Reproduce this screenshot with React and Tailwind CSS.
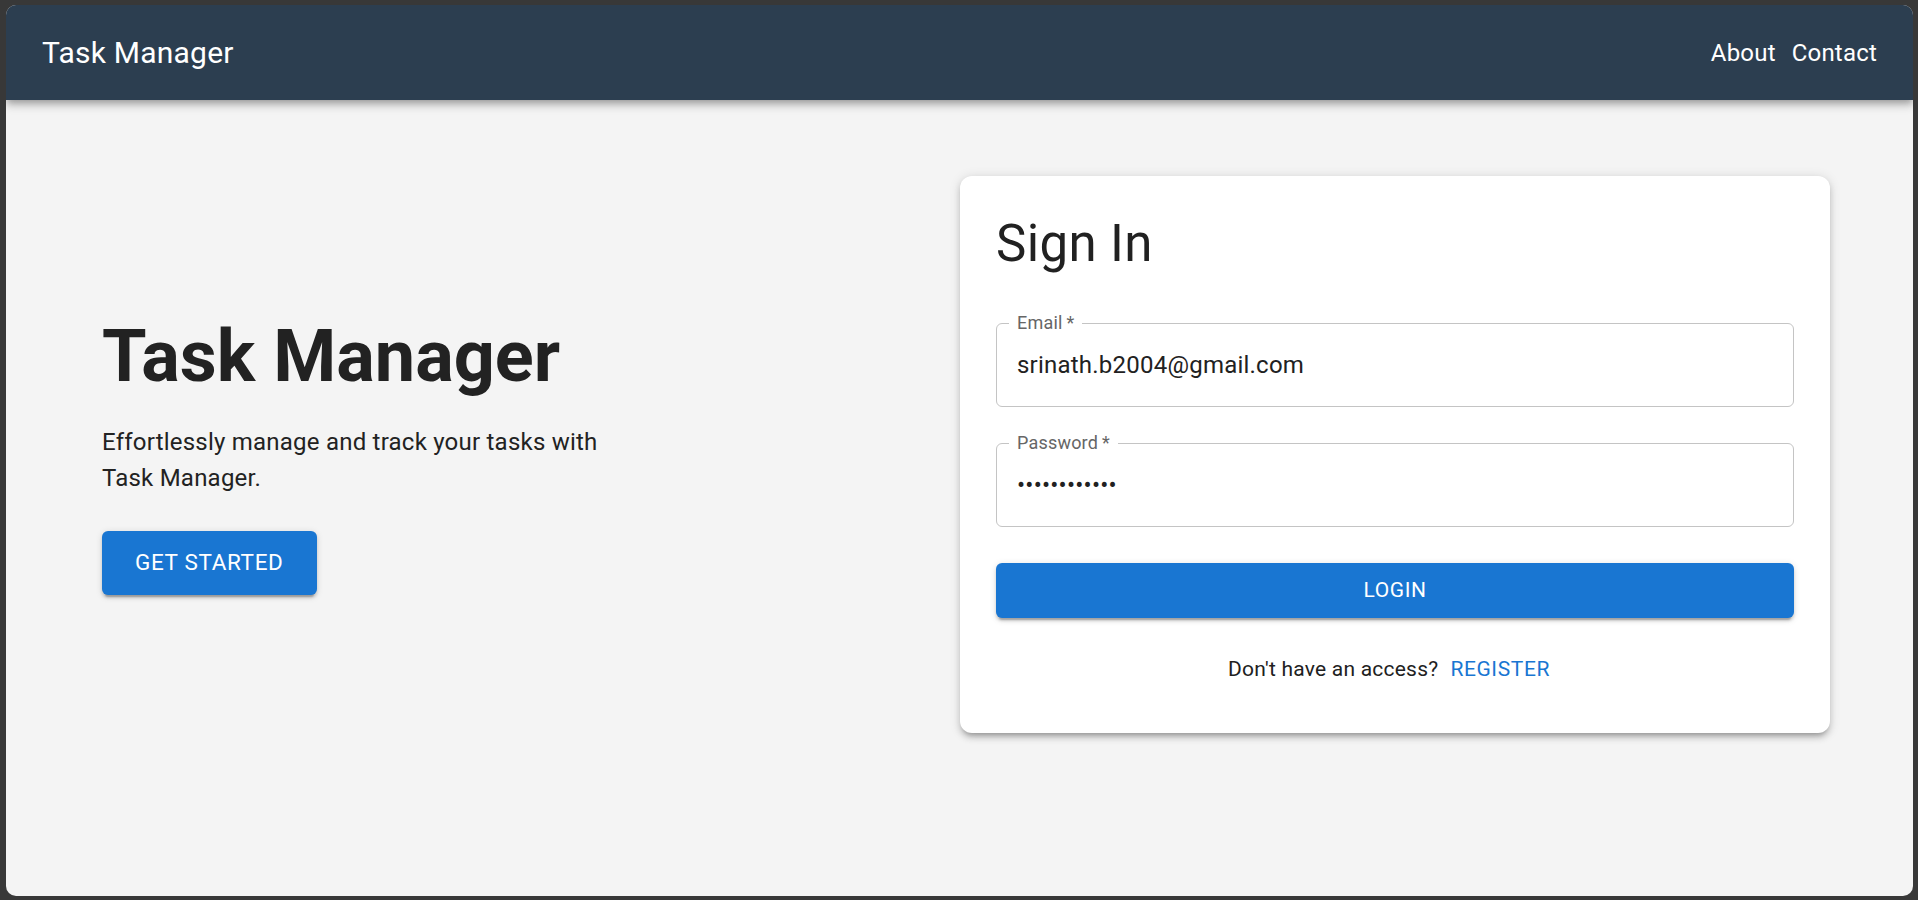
import React from 'react'

function OutlinedField({ label, type, value }) {
  return (
    <div className="relative h-[84px] rounded-[6px] border border-[#c4c4c4]">
      <span className="absolute -top-[14px] left-[12px] bg-white px-[8px] text-[18px] leading-[26px] tracking-[0.2px] text-[#666666]">
        {label}&thinsp;*
      </span>
      <input
        type={type}
        defaultValue={value}
        readOnly
        className="h-full w-full bg-transparent px-[20px] text-[24px] tracking-[0.225px] text-[#212121] outline-none"
      />
    </div>
  )
}

function SignInCard() {
  return (
    <div className="w-[870px] rounded-[12px] bg-white p-[36px] shadow-[0_4.5px_4.5px_-3px_rgba(0,0,0,0.2),0_4.5px_6px_0_rgba(0,0,0,0.14),0_1.5px_12px_0_rgba(0,0,0,0.12)]">
      <h2 className="text-[51px] leading-[63px] tracking-[0.37px] text-[#212121]">Sign In</h2>

      <div className="mt-[48px]">
        <OutlinedField label="Email" type="text" value="srinath.b2004@gmail.com" />
      </div>
      <div className="mt-[36px]">
        <OutlinedField label="Password" type="password" value="password1234" />
      </div>

      <button className="mt-[36px] h-[55px] w-full rounded-[6px] bg-[#1976d2] text-[21px] font-normal uppercase tracking-[0.6px] text-white shadow-[0_4.5px_1.5px_-3px_rgba(0,0,0,0.2),0_3px_3px_0_rgba(0,0,0,0.14),0_1.5px_7.5px_0_rgba(0,0,0,0.12)]">
        Login
      </button>

      <div className="mt-[24px] flex h-[55px] items-center justify-center">
        <span className="text-[21px] tracking-[0.225px] text-[#212121]">Don't have an access?</span>
        <button className="px-[12px] text-[21px] font-normal uppercase tracking-[0.6px] text-[#1976d2]">
          Register
        </button>
      </div>
    </div>
  )
}

export default function App() {
  return (
    <div className="h-[900px] bg-[#383838] pb-[4px] pl-[6px] pr-[5px] pt-[5px] font-['Roboto',sans-serif]">
      <div className="flex h-full flex-col overflow-hidden rounded-[10px] bg-[#f4f4f4]">
        <header className="relative z-10 flex h-[95px] shrink-0 items-center justify-between bg-[#2c3e50] px-[36px] text-white shadow-[0_3px_6px_-1.5px_rgba(0,0,0,0.2),0_6px_7.5px_0_rgba(0,0,0,0.14),0_1.5px_15px_0_rgba(0,0,0,0.12)]">
          <span className="text-[30px] tracking-[0.225px]">Task Manager</span>
          <nav className="flex gap-[16px] text-[24px] tracking-[0.2px]">
            <a href="#">About</a>
            <a href="#">Contact</a>
          </nav>
        </header>

        <main className="flex items-center pt-[76px]">
          <section className="w-[954px] pl-[96px]">
            <h1 className="mb-[25px] text-[72px] font-bold leading-[84px] text-[#222222]">
              Task Manager
            </h1>
            <p className="mb-[35px] max-w-[520px] text-[24px] leading-[36px] tracking-[0.225px] text-[#222222]">
              Effortlessly manage and track your tasks with Task Manager.
            </p>
            <button className="h-[64px] rounded-[6px] bg-[#1976d2] px-[33px] text-[22.5px] font-normal uppercase tracking-[0.64px] text-white shadow-[0_4.5px_1.5px_-3px_rgba(0,0,0,0.2),0_3px_3px_0_rgba(0,0,0,0.14),0_1.5px_7.5px_0_rgba(0,0,0,0.12)]">
              Get Started
            </button>
          </section>

          <SignInCard />
        </main>
      </div>
    </div>
  )
}
